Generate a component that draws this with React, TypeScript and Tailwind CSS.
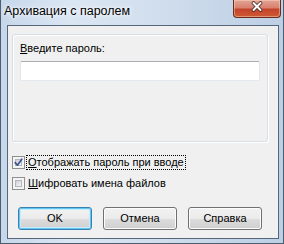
import React from "react";

function Checkbox({ checked }: { checked?: boolean }) {
  return (
    <div className="relative h-[13px] w-[13px] shrink-0 border border-[#8f8f8f] bg-[#f4f4f4]">
      <div className="absolute inset-[2px] border border-[#b3b6ba] bg-gradient-to-br from-[#cbcfd5] to-[#f6f6f6]" />
      {checked && (
        <svg className="absolute left-0 top-0" width="11" height="11" viewBox="0 0 11 11">
          <path d="M2.2 5.6 L4.4 8.2 L8.8 2.2" fill="none" stroke="#3d5490" strokeWidth="1.7" strokeLinecap="round" strokeLinejoin="round" />
        </svg>
      )}
    </div>
  );
}

function Button({ children, primary }: { children: React.ReactNode; primary?: boolean }) {
  return (
    <div
      className={
        "flex h-[23px] w-[74px] items-center justify-center rounded-[3px] border bg-[linear-gradient(to_bottom,#f2f2f2_0%,#ebebeb_50%,#dddddd_51%,#cfcfcf_100%)] " +
        (primary
          ? "border-[#3c7fb1] shadow-[inset_0_0_0_1px_#5fc7f2,inset_0_0_0_2px_#c6ecfb]"
          : "border-[#707070] shadow-[inset_0_0_0_1px_#fcfcfc]")
      }
    >
      {children}
    </div>
  );
}

export default function App() {
  return (
    <div className="relative h-[244px] w-[284px] overflow-hidden font-['Liberation_Sans',Arial,sans-serif] text-[11px] text-black">
      <div className="flex h-full flex-col border-x border-b border-[#4e5d6e] bg-[linear-gradient(to_right,#c6d7eb_0%,#dbe6f3_25%,#d1deed_55%,#bccfe5_100%)]">
        <div className="flex h-[25px] shrink-0 items-start pl-[3px] pt-[3px]">
          <span className="text-[12.5px] leading-[16px] [text-shadow:0_0_6px_#ffffff,0_0_3px_#ffffff]">
            Архивация с паролем
          </span>
        </div>
        <div className="mb-[4px] ml-[6px] mr-[4px] flex flex-1 flex-col border border-[#56677a] bg-[#f0f0f0] pl-[4px] pt-[8px]">
          <div className="flex h-[108px] w-[256px] flex-col rounded-[3px] border border-[#d5dfe5] pl-[7px] pt-[7px] shadow-[inset_1px_1px_0_#ffffff,1px_1px_0_#ffffff]">
            <div className="leading-[13px]">
              <span className="underline underline-offset-[1px]">В</span>ведите пароль:
            </div>
            <div className="mt-[6px] h-[20px] w-[240px] rounded-[2px] border border-[#e2e3ea] border-t-[#abadb3] border-b-[#e3e9ef] bg-white" />
          </div>
          <div className="mt-[14px] flex h-[13px] items-center">
            <Checkbox checked />
            <span className="ml-[1px] border border-dotted border-[#000] px-[1px] leading-[13px]">
              <span className="underline underline-offset-[1px]">О</span>тображать пароль при вводе
            </span>
          </div>
          <div className="mt-[8px] flex h-[13px] items-center">
            <Checkbox />
            <span className="ml-[2px] px-[1px] leading-[13px]">
              <span className="underline underline-offset-[1px]">Ш</span>ифровать имена файлов
            </span>
          </div>
          <div className="ml-[6px] mt-[17px] flex gap-[11px]">
            <Button primary>OK</Button>
            <Button>Отмена</Button>
            <Button>Справка</Button>
          </div>
        </div>
      </div>
      <div className="absolute right-[3px] top-0 flex h-[18px] w-[48px] items-start justify-center rounded-b-[4px] border border-t-0 border-[#6b2a1e] bg-[linear-gradient(to_bottom,#e3a595_0%,#d88170_45%,#c3432a_55%,#cf5a33_100%)] pt-[1px] shadow-[inset_0_0_0_1px_rgba(255,220,200,0.45)]">
        <svg width="14" height="11" viewBox="0 0 14 11">
          <path d="M3.5 2 L10.5 9 M10.5 2 L3.5 9" stroke="#4a2a24" strokeWidth="3.6" strokeLinecap="round" />
          <path d="M3.5 2 L10.5 9 M10.5 2 L3.5 9" stroke="#ffffff" strokeWidth="2" strokeLinecap="round" />
        </svg>
      </div>
    </div>
  );
}
